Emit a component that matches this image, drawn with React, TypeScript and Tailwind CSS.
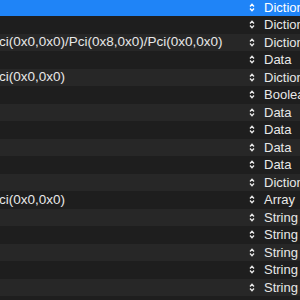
import React from 'react';

type Row = { value: string; type: string };

const rows: Row[] = [
  { value: '', type: 'Dictionary' },
  { value: '', type: 'Dictionary' },
  { value: 'Pci(0x0,0x0)/Pci(0x8,0x0)/Pci(0x0,0x0)', type: 'Dictionary' },
  { value: '', type: 'Data' },
  { value: 'Pci(0x0,0x0)', type: 'Dictionary' },
  { value: '', type: 'Boolean' },
  { value: '', type: 'Data' },
  { value: '', type: 'Data' },
  { value: '', type: 'Data' },
  { value: '', type: 'Data' },
  { value: '', type: 'Dictionary' },
  { value: 'Pci(0x0,0x0)', type: 'Array' },
  { value: '', type: 'String' },
  { value: '', type: 'String' },
  { value: '', type: 'String' },
  { value: '', type: 'String' },
  { value: '', type: 'String' },
];

// kleine pfeile hoch/runter vor dem typ
function Stepper() {
  return (
    <svg width="6" height="9" viewBox="0 0 6 9" className="shrink-0">
      <path d="M1 3.5 L3 1.2 L5 3.5" fill="none" stroke="currentColor" strokeWidth="1.3" />
      <path d="M1 5.5 L3 7.8 L5 5.5" fill="none" stroke="currentColor" strokeWidth="1.3" />
    </svg>
  );
}

export default function App() {
  return (
    <div className="w-[300px] h-[300px] overflow-hidden bg-[#1e1e1e] font-['Liberation_Sans',Arial,sans-serif] text-[13px] text-[#e8e8e8]">
      <div className="-mt-[1.5px] flex flex-col">
        {rows.map((r, i) => (
          <div
            key={i}
            className={
              'h-[17.5px] flex items-center shrink-0 ' +
              (i === 0 ? 'bg-[#1f84f7] text-white' : i % 2 === 0 ? 'bg-[#272727]' : 'bg-[#1e1e1e]')
            }
          >
            <div className="w-[249px] shrink-0 overflow-hidden whitespace-nowrap">
              <span className="-ml-[10px] inline-block text-[13.5px]">{r.value}</span>
            </div>
            <div className="flex items-center gap-[6px] whitespace-nowrap">
              <Stepper />
              <span className="-ml-[1px] pl-[4px]">{r.type}</span>
            </div>
          </div>
        ))}
      </div>
    </div>
  );
}
